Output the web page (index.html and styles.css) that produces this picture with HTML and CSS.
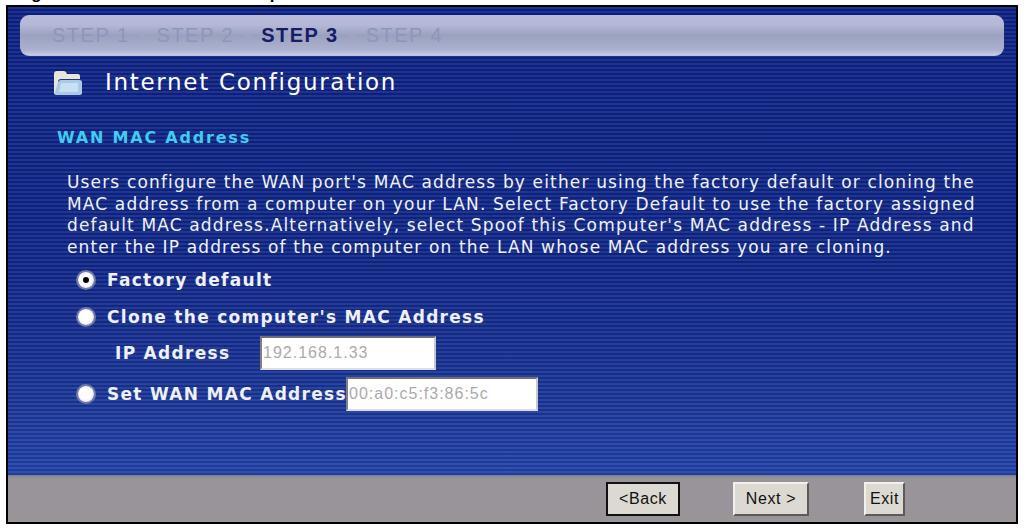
FILE: index.html
```html
<!DOCTYPE html>
<html lang="en">

<head>
    <meta charset="UTF-8">
    <title>Internet Configuration</title>
    <link rel="stylesheet" href="styles.css">
</head>

<body>
    <div class="caption"><span>Figure 42 Internet Connection Setup</span></div>
    <div class="frame">
        <div class="main">
            <div class="steps">
                <span>STEP 1</span><i class="arrow"></i>
                <span>STEP 2</span><i class="arrow"></i>
                <span class="current">STEP 3</span><i class="arrow"></i>
                <span>STEP 4</span>
            </div>

            <div class="title">
                <svg class="folder" viewBox="0 0 30 27" width="30" height="27">
                    <path d="M2 25V5q0-3 3-3h7q2 0 3 3h11q2 0 2 2v3H9q-3 0-3 3v12z" fill="#e8e6d8" />
                    <path d="M4 26q-2 0-1-3l3-10q1-2 3-2h18q3 0 3 2v11q0 2-2 2z" fill="#a9cbe6" />
                    <path d="M7 23l2-8q0-1 2-1h15v9z" fill="#c9e0f2" />
                </svg>
                <h1>Internet Configuration</h1>
            </div>

            <h2>WAN MAC Address</h2>
            <p class="desc">Users configure the WAN port's MAC address by either using the factory default or cloning the<br>MAC address from a computer on your LAN. Select Factory Default to use the factory assigned<br>default MAC address.Alternatively, select Spoof this Computer's MAC address - IP Address and<br>enter the IP address of the computer on the LAN whose MAC address you are cloning.</p>

            <div class="options">
                <div class="row row-factory">
                    <span class="radio checked"></span>
                    <label>Factory default</label>
                </div>
                <div class="row row-clone">
                    <span class="radio"></span>
                    <label>Clone the computer's MAC Address</label>
                </div>
                <div class="row row-ip">
                    <label>IP Address</label>
                    <input class="field" type="text" value="192.168.1.33" readonly>
                </div>
                <div class="row row-wan">
                    <span class="radio"></span>
                    <label>Set WAN MAC Address</label>
                    <input class="field" type="text" value="00:a0:c5:f3:86:5c" readonly>
                </div>
            </div>
        </div>

        <div class="footer">
            <button class="btn btn-back" type="button">&lt;Back</button>
            <button class="btn btn-next" type="button">Next &gt;</button>
            <button class="btn btn-exit" type="button">Exit</button>
        </div>
    </div>
</body>

</html>
```

FILE: styles.css
```css
body {
    margin: 0;
    background-color: #fff;
    font-family: 'DejaVu Sans', sans-serif;
    overflow: hidden;
}

.caption {
    height: 5px;
    overflow: hidden;
    padding-left: 18px;
    font-family: 'Liberation Sans', sans-serif;
    font-size: 17px;
    font-weight: bold;
    line-height: 5px;
    color: #000;
}

.caption span {
    display: block;
    margin-top: -9px;
    letter-spacing: -0.9px;
    white-space: nowrap;
}

.frame {
    width: 1008px;
    height: 515px;
    margin-left: 6px;
    border: 2px solid #000;
    display: flex;
    flex-direction: column;
}

.main {
    flex: 1;
    padding: 8px 12px 0 12px;
    color: #fff;
    background-image:
        repeating-linear-gradient(to bottom, rgba(255, 255, 255, 0.08) 0, rgba(255, 255, 255, 0.08) 2px, rgba(0, 0, 0, 0.08) 2px, rgba(0, 0, 0, 0.08) 4px),
        linear-gradient(to bottom, #0c2284, #0f2688 55%, #1a3698 85%, #2242aa);
}

/* step bar */
.steps {
    height: 41px;
    padding-left: 32px;
    display: flex;
    align-items: center;
    gap: 10.5px;
    border-radius: 9px;
    font-family: 'Liberation Sans', sans-serif;
    font-size: 20px;
    letter-spacing: 1.5px;
    color: #8f95bd;
    background: linear-gradient(to bottom, #b9bbdd 0, #b4b7d6 25%, #9aa1bf 50%, #adb1cf 85%, #c4c8ea 97%, #b9bcdc 100%);
}

.steps .current {
    font-weight: bold;
    color: #161c66;
}

.arrow {
    width: 0;
    height: 0;
    border-left: 6px solid #a0a4ca;
    border-top: 4px solid transparent;
    border-bottom: 4px solid transparent;
}

/* heading */
.title {
    display: flex;
    align-items: center;
    gap: 23px;
    margin: 13px 0 0 32px;
}

h1 {
    margin: 0;
    font-size: 23px;
    font-weight: normal;
    line-height: 27px;
    letter-spacing: 1.7px;
}

h2 {
    margin: 34px 0 0 37px;
    font-size: 16px;
    font-weight: bold;
    line-height: 16px;
    letter-spacing: 1.8px;
    color: #3fcdf0;
}

.desc {
    margin: 26px 0 0 47px;
    font-size: 17px;
    line-height: 21.7px;
    letter-spacing: 1.15px;
    white-space: nowrap;
    color: #f0f2fa;
}

/* options */
.options {
    margin-left: 58px;
    font-size: 17px;
    font-weight: bold;
    letter-spacing: 1.3px;
    color: #eef0fa;
}

.row {
    display: flex;
    align-items: center;
}

.row-factory {
    margin-top: 11px;
}

.row-clone {
    margin-top: 17px;
}

.row-ip {
    margin: 9px 0 0 37px;
}

.row-wan {
    margin-top: 7px;
}

.row-ip label {
    width: 145px;
}

.row-wan label {
    width: 239px;
    white-space: nowrap;
}

.radio {
    width: 16px;
    height: 16px;
    margin-right: 13px;
    border-radius: 50%;
    background: radial-gradient(circle at 45% 45%, #fff 45%, #d4d6e0 100%);
    box-shadow: 0 0 0 2px rgba(130, 135, 170, 0.85);
    display: flex;
    align-items: center;
    justify-content: center;
}

.radio.checked::after {
    content: "";
    width: 6px;
    height: 6px;
    border-radius: 50%;
    background-color: #000;
}

.field {
    box-sizing: border-box;
    height: 34px;
    padding: 0 1px;
    background-color: #fff;
    border: 2px solid;
    border-color: #6e6e78 #c8c8d0 #dcdce2 #808088;
    font-family: 'Liberation Sans', sans-serif;
    font-size: 16px;
    letter-spacing: 1px;
    color: #aaa;
    outline: none;
}

.row-ip .field {
    width: 176px;
}

.row-wan .field {
    width: 192px;
}

/* footer */
.footer {
    height: 47px;
    display: flex;
    align-items: center;
    background: linear-gradient(to bottom, #77808f 0, #98949a 3px, #989498 100%);
}

.btn {
    height: 34px;
    padding: 0;
    background-color: #dcd9d2;
    border: 2px solid;
    border-color: #f2f0ea #5c5a58 #5c5a58 #f2f0ea;
    font-family: 'Liberation Sans', sans-serif;
    font-size: 16px;
    letter-spacing: 0.6px;
    color: #111;
}

.btn-back {
    width: 74px;
    margin-left: 598px;
    border-color: #111;
}

.btn-next {
    width: 76px;
    margin-left: 53px;
}

.btn-exit {
    width: 41px;
    margin-left: 55px;
}
```
